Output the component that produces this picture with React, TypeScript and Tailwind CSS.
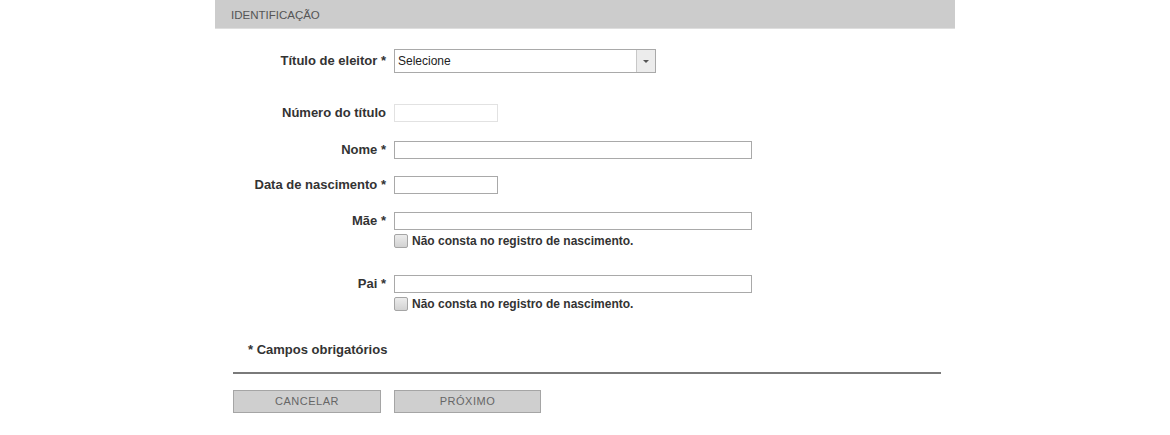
const font = { fontFamily: '"Liberation Sans", Arial, sans-serif' };

function Row({ label, children, className = "" }: { label: string; children: React.ReactNode; className?: string }) {
  return (
    <div className={"flex items-center " + className}>
      <div className="w-[179px] shrink-0 pr-[8px] text-right text-[13px] font-bold leading-[18px] text-[#333]">{label}</div>
      {children}
    </div>
  );
}

function TextBox({ wide, disabled }: { wide?: boolean; disabled?: boolean }) {
  return (
    <input
      type="text"
      disabled={disabled}
      className={
        "h-[18px] bg-white outline-none " +
        (wide ? "w-[358px] " : "w-[104px] ") +
        (disabled ? "border border-[#e2e2e2]" : "border border-[#a9a9a9]")
      }
    />
  );
}

function NaoConsta() {
  return (
    <label className="ml-[179px] mt-[4px] flex h-[14px] items-center gap-[4px] text-[12px] font-bold leading-[14px] text-[#333]">
      <span className="h-[14px] w-[14px] rounded-[2px] border border-[#a5a5a5] bg-gradient-to-b from-[#ececec] to-[#d2d2d2]" />
      Não consta no registro de nascimento.
    </label>
  );
}

export default function App() {
  return (
    <div className="min-h-[435px] w-full bg-white" style={font}>
      <div className="mx-auto w-[740px]">
        <div className="flex h-[29px] items-center border-b border-[#dedede] bg-[#cccccc] pl-[16px] pt-[3px] text-[11.5px] text-[#555]">
          IDENTIFICAÇÃO
        </div>

        <Row label="Título de eleitor *" className="mt-[20px]">
          <div className="flex h-[24px] w-[262px] items-stretch border border-[#a9a9a9] bg-white">
            <span className="flex-1 pl-[3px] pt-[4px] text-[12px] leading-[14px] text-[#222]">Selecione</span>
            <span className="flex w-[19px] items-center justify-center border-l border-[#c8c8c8] bg-[#ececec]">
              <span className="h-0 w-0 border-x-[3px] border-t-[3px] border-x-transparent border-t-[#555]" />
            </span>
          </div>
        </Row>

        <Row label="Número do título" className="mt-[31px]">
          <TextBox disabled />
        </Row>

        <Row label="Nome *" className="mt-[19px]">
          <TextBox wide />
        </Row>

        <Row label="Data de nascimento *" className="mt-[17px]">
          <TextBox />
        </Row>

        <Row label="Mãe *" className="mt-[18px]">
          <TextBox wide />
        </Row>
        <NaoConsta />

        <Row label="Pai *" className="mt-[27px]">
          <TextBox wide />
        </Row>
        <NaoConsta />

        <div className="mt-[31px] pl-[33px] text-[13px] font-bold leading-[16px] text-[#333]">* Campos obrigatórios</div>

        <div className="ml-[18px] mr-[14px] mt-[14px] h-[2px] bg-[#7a7a7a]" />

        <div className="mt-[16px] flex gap-[13px] pl-[18px]">
          <button className="h-[23px] w-[148px] border border-[#a5a5a5] bg-[#cfcfcf] text-[11px] tracking-[0.5px] text-[#666]">
            CANCELAR
          </button>
          <button className="h-[23px] w-[147px] border border-[#a5a5a5] bg-[#cfcfcf] text-[11px] tracking-[0.5px] text-[#666]">
            PRÓXIMO
          </button>
        </div>
      </div>
    </div>
  );
}
